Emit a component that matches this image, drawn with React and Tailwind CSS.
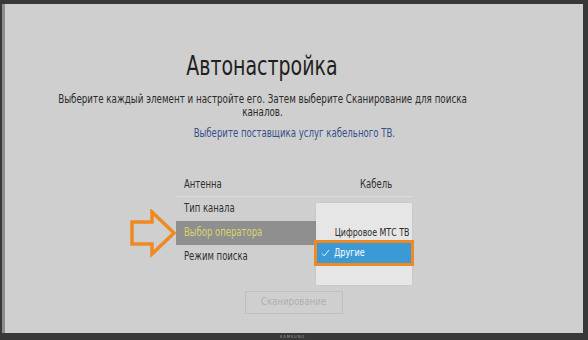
import React from 'react'

const condensed = {fontFamily: '"DejaVu Sans Condensed", "Liberation Sans Narrow", Roboto, sans-serif'}

// the TV font is much narrower than anything installed, so squeeze the glyphs
const Squeeze = ({children, className = 'origin-left'}) => (
  <span className={`inline-block whitespace-nowrap scale-x-[0.82] ${className}`}>{children}</span>
)

const Arrow = () => (
  <svg
    className="absolute left-[-50px] top-[36px]"
    width="52"
    height="50"
    viewBox="0 0 52 50"
    fill="none"
  >
    <path
      d="M6 13 H26 V3 L48 24 L26 45 V35 H6 Z"
      stroke="#ef8a22"
      strokeWidth="3.5"
      strokeLinejoin="miter"
    />
  </svg>
)

const Row = ({children, className = ''}) => (
  <div className={`h-[24px] flex items-center justify-between pl-[8px] pr-[20px] text-[11.5px] ${className}`}>
    {children}
  </div>
)

export default function App() {
  return (
    <div className="w-[588px] h-[340px] bg-[#383838] flex flex-col pt-[4px] pl-[2px] pr-[5px]" style={condensed}>
      <div className="flex-1 bg-[#cfcfcf] border-l-[3px] border-[#8d8d8d] flex flex-col items-center">
        <div className="mr-[64px] flex flex-col items-center">
          <h1 className="mt-[46px] text-[27px] leading-[32px] font-light text-[#1f1f1f] scale-x-[0.78]">
            Автонастройка
          </h1>
          <p className="mt-[11px] w-[515px] text-center text-[12px] leading-[13px] text-[#2a2a2a] scale-x-[0.81]">
            Выберите каждый элемент и настройте его. Затем выберите Сканирование для поиска каналов.
          </p>
        </div>
        <p className="mt-[7px] text-[11.5px] leading-[14px] text-[#35508c] scale-x-[0.83]">
          Выберите поставщика услуг кабельного ТВ.
        </p>

        <div className="relative mt-[33px] w-[236px] text-[#303030]">
          <Row className="border-b border-[#dcdcdc]">
            <Squeeze>Антенна</Squeeze>
            <Squeeze className="origin-right">Кабель</Squeeze>
          </Row>
          <Row>
            <Squeeze>Тип канала</Squeeze>
          </Row>
          <Row className="bg-[#8f8f8f] text-[#d9d46e]">
            <Squeeze>Выбор оператора</Squeeze>
          </Row>
          <Row>
            <Squeeze>Режим поиска</Squeeze>
          </Row>

          <Arrow />

          <div className="absolute left-[140px] top-[30px] w-[96px] h-[82px] bg-[#e6e6e6] shadow-[0_0_2px_rgba(0,0,0,0.08)]">
            <div className="mt-[23px] pr-[6px] text-right text-[11px] leading-[14px] text-[#2a2a2a]">
              <span className="inline-block whitespace-nowrap scale-x-[0.8] origin-right">Цифровое МТС ТВ</span>
            </div>
            <div className="absolute left-[-2px] top-[37px] w-[100px] h-[26px] border-[3px] border-[#ef8a22] bg-[#3b9ad6] flex items-center gap-[4px] pl-[4px] text-[11px] text-white">
              <svg width="9" height="8" viewBox="0 0 9 8" fill="none">
                <path d="M1 4.5 L3.3 7 L8 1" stroke="#dbeefa" strokeWidth="1" />
              </svg>
              <Squeeze>Другие</Squeeze>
            </div>
          </div>
        </div>

        <div className="mt-[22px] w-[98px] h-[23px] border border-[#bfbfbf] flex items-center justify-center text-[11px] text-[#b0b0b0]">
          <span className="inline-block whitespace-nowrap scale-x-[0.87]">Сканирование</span>
        </div>
      </div>
      <div className="h-[7px] flex items-center justify-center text-[4px] leading-[4px] text-[#9a9a9a] tracking-[1px]">
        SAMSUNG
      </div>
    </div>
  )
}
